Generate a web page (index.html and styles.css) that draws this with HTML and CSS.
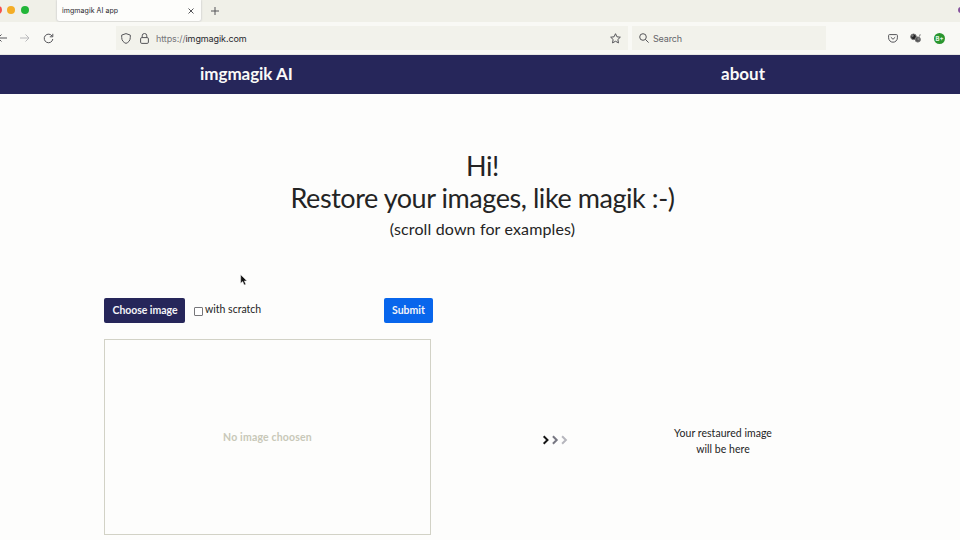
FILE: index.html
```html
<!DOCTYPE html>
<html lang="en">
<head>
<meta charset="utf-8">
<title>imgmagik AI app</title>
<link rel="stylesheet" href="styles.css">
</head>
<body>
<div class="tabstrip">
  <div class="lights"><i class="red"></i><i class="amber"></i><i class="green"></i></div>
  <div class="tab"><span>imgmagik AI app</span>
    <svg width="6" height="6" viewBox="0 0 6 6"><path d="M.5.5l5 5M5.5.5l-5 5"/></svg>
  </div>
  <svg class="plus" width="8" height="8" viewBox="0 0 8 8"><path d="M4 0v8M0 4h8"/></svg>
  <i class="account"></i>
</div>
<div class="toolbar">
  <div class="nav">
    <svg width="10" height="10" viewBox="0 0 10 10"><path d="M10 5H1M4.500 1.500L1 5l3.500 3.500"/></svg>
    <svg class="dim" width="10" height="10" viewBox="0 0 10 10"><path d="M0 5h9M5.500 1.500L9 5 5.500 8.500"/></svg>
    <svg width="11" height="11" viewBox="0 0 11 11"><path d="M9.200 3.200A4.300 4.300 0 1 0 9.800 6M9.800.8v3H6.800"/></svg>
  </div>
  <div class="address">
    <svg width="10" height="11" viewBox="0 0 10 11"><path d="M5 .6L9.300 2.100V4.500C9.300 7.500 7.500 9.500 5 10.400 2.500 9.500.7 7.500.7 4.500V2.100z"/></svg>
    <svg width="9" height="11" viewBox="0 0 9 11"><rect x=".6" y="4.600" width="7.800" height="5.800" rx="1.200"/><path d="M2.200 4.600V2.800a2.300 2.300 0 0 1 4.600 0v1.800"/></svg>
    <span class="url">https://<b>imgmagik.com</b></span>
    <svg class="star" width="11" height="11" viewBox="0 0 11 11"><path d="M5.500.7l1.450 3.100 3.400.4-2.500 2.300.65 3.400-3-1.650-3 1.650.65-3.400-2.500-2.300 3.400-.4z"/></svg>
  </div>
  <div class="search">
    <svg width="10" height="10" viewBox="0 0 10 10"><circle cx="4" cy="4" r="3.300"/><path d="M6.400 6.400l3.200 3.200"/></svg>
    <span>Search</span>
  </div>
  <div class="extensions">
    <svg width="10" height="9" viewBox="0 0 10 9"><path d="M1.500.6h7q.9 0 .9.900v2.300a4.400 4.400 0 0 1-8.800 0V1.500q0-.9.900-.9zM2.800 3.200L5 5.300l2.200-2.100"/></svg>
    <svg class="masks" width="12" height="10" viewBox="0 0 12 10"><circle cx="3.500" cy="3.800" r="2.800" fill="#222"/><circle cx="7.800" cy="6.500" r="2.600" fill="#555"/><circle cx="2.500" cy="2.800" r=".8" fill="#888"/><circle cx="8.500" cy="6" r=".8" fill="#ddd"/><path d="M9.500 3.500l.7-2.200"/></svg>
    <span class="badge">B+</span>
  </div>
</div>
<header class="site">
  <div class="brand">imgmagik AI</div>
  <div class="about">about</div>
</header>
<main>
  <section class="hero">
    <h1>Hi!<br><span>Restore your images, like magik :-)</span></h1>
    <p>(scroll down for examples)</p>
  </section>
  <section class="work">
    <div class="source">
      <div class="controls">
        <button class="choose">Choose image</button>
        <span class="check"></span><span class="scratch">with scratch</span>
        <button class="submit">Submit</button>
      </div>
      <div class="drop">No image choosen</div>
    </div>
    <svg class="arrows" width="26" height="10" viewBox="0 0 26 10"><path d="M1.700 1.200L5.500 5 1.700 8.800" stroke="#151515"/><path d="M10.900 1.200L14.700 5l-3.800 3.800" stroke="#777782"/><path d="M20.100 1.200L23.900 5l-3.800 3.800" stroke="#b6b6bd"/></svg>
    <div class="result">Your restaured image<br>will be here</div>
  </section>
</main>
<svg class="cursor" width="8" height="12" viewBox="0 0 8 12"><path d="M.7.7v8.600l2-1.900 1.500 3.500 1.600-.7-1.500-3.300h2.700z"/></svg>
</body>
</html>
```
FILE: styles.css
```css
* { box-sizing: border-box; }
body { margin: 0; width: 960px; height: 540px; overflow: hidden; background: #fdfdfc; color: #242424; font-family: Lato, sans-serif; position: relative; }
svg { display: block; flex: none; fill: none; stroke: #555559; stroke-width: 1; }
.tabstrip, .toolbar { display: flex; font-family: Inter, sans-serif; }
.tabstrip { height: 22px; background: #f0f0e8; overflow: hidden; }
.lights { display: flex; gap: 5px; width: 57px; padding-top: 6px; margin-left: -6px; }
.lights i { width: 8px; height: 8px; border-radius: 50%; flex: none; }
.lights .green { margin-left: 1px; }
.red { background: #f4504b; }
.amber { background: #f4ad25; }
.green { background: #22b638; }
.tab { width: 144px; margin-left: 6px; height: 21px; display: flex; align-items: center; justify-content: space-between; padding: 0 7px 0 5px; background: #fdfdfb; border-radius: 0 0 2px 2px; box-shadow: 0 0 2px #aaaab4; font-size: 7px; letter-spacing: .07px; color: #28282c; }
.plus { margin: 7px 0 0 10px; }
.account { width: 6px; height: 6px; margin: 7px -4px 0 auto; border-radius: 50%; background: #84519c; }
.toolbar { height: 33px; align-items: center; background: #f9f9f5; border-bottom: 1px solid #e7e7e4; }
.nav { width: 116px; display: flex; align-items: center; gap: 13px; margin-left: -3px; }
.dim { stroke: #b9b9bb; }
.address { width: 512px; height: 24px; margin-left: 3px; display: flex; align-items: center; background: #f2f2eb; padding: 0 7px 0 5px; font-size: 9px; }
.address svg + svg { margin-left: 9px; }
.url { margin-left: 7px; color: #77777a; letter-spacing: -.1px; }
.url b { font-weight: 400; color: #29292d; }
.address .star { margin-left: auto; }
.search { width: 194px; height: 24px; margin-left: 4px; display: flex; align-items: center; gap: 4px; padding-left: 7px; background: #f2f2eb; font-size: 9px; letter-spacing: -.15px; color: #65656a; }
.extensions { display: flex; align-items: center; gap: 12px; margin-left: 62px; }
.masks { stroke: #777; }
.badge { width: 11px; height: 11px; border-radius: 50%; background: #2a962f; color: #e6f6e6; font-size: 6px; font-weight: 700; line-height: 11px; text-align: center; }
.site { height: 39px; display: flex; background: #26265a; color: #fafaf8; font-size: 17px; font-weight: 700; line-height: 37px; }
.brand { width: 521px; margin-left: 200px; letter-spacing: -.05px; }
.hero { height: 204px; padding: 56px 0 0 5px; text-align: center; }
h1 { margin: 0; font-size: 27px; line-height: 32px; font-weight: 400; letter-spacing: -.44px; }
.hero p { margin: 5px 0 0; font-size: 16px; line-height: 20px; letter-spacing: .14px; }
.work { display: flex; padding-left: 104px; }
.source { width: 329px; }
.controls { height: 25px; display: flex; align-items: center; }
button { height: 25px; border: 0; border-radius: 2px; padding: 0 0 1px; color: #f4f4f8; font: 700 10.500px Lato, sans-serif; }
.choose { width: 81px; background: #26265a; padding-left: 1px; letter-spacing: -.05px; }
.check { width: 9px; height: 9px; margin: 1px 2px 0 9px; border: 1px solid #77777a; border-radius: 1px; background: #fff; }
.scratch { font-size: 10.500px; line-height: 14px; padding-bottom: 3px; }
.submit { width: 49px; margin-left: auto; background: #0866ec; }
.drop { width: 327px; height: 196px; margin-top: 16px; border: 1px solid #d2d2c6; display: grid; place-items: center; font-size: 10.500px; font-weight: 700; letter-spacing: .17px; color: #c8c8b8; }
.arrows { margin: 137px 0 0 109px; stroke-width: 2; }
.result { width: 120px; margin: 127px 0 0 95px; text-align: center; font-size: 10.500px; line-height: 16px; letter-spacing: .04px; }
.cursor { position: absolute; left: 240px; top: 274px; }
.cursor path { fill: #111; stroke: #ededed; stroke-width: .5; }
```
